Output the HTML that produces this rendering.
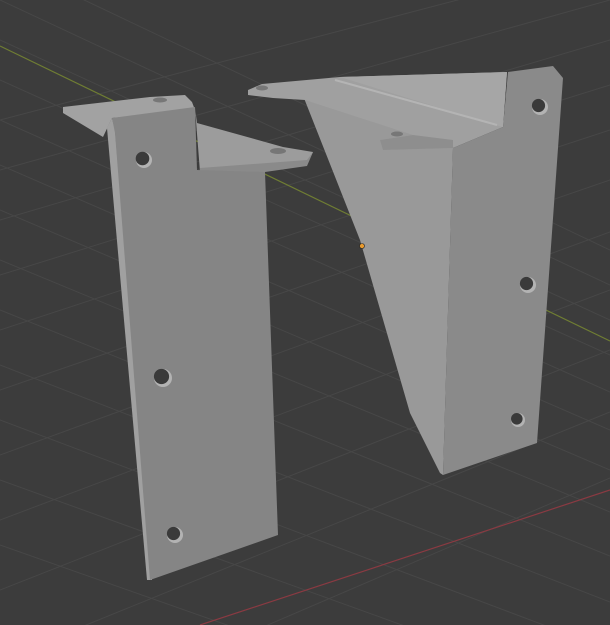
<!DOCTYPE html>
<html><head><style>html,body{margin:0;padding:0;width:610px;height:625px;background:#3b3b3b;overflow:hidden}svg{display:block}</style></head>
<body>
<svg width="610" height="625" viewBox="0 0 610 625" xmlns="http://www.w3.org/2000/svg">
<rect width="610" height="625" fill="#3c3c3c"/>
<g stroke="#474747" stroke-width="1" fill="none">
<path d="M0,-40 L610,250 M0,0 L610,285 M0,40 L610,320 M0,80 L610,355 M0,120 L610,392 M0,165 L610,430 M0,210 L610,470 M0,260 L610,512 M0,310 L610,556 M0,365 L610,602 M0,420 L610,650 M0,480 L610,700 M0,545 L610,760"/>
<path d="M0,120 L610,-40 M0,170 L610,0 M0,220 L610,40 M0,275 L610,85 M0,330 L610,130 M0,390 L610,180 M0,455 L610,232 M0,520 L610,290 M0,590 L610,350 M0,660 L610,412 M0,740 L610,478"/>
</g>
<line x1="0" y1="46" x2="610" y2="341" stroke="#6f7d33" stroke-width="1.2"/>
<line x1="200" y1="625" x2="610" y2="490" stroke="#8a3a42" stroke-width="1.2"/>
<polygon points="63,107 150,97 185,95 192,102 195,110 112,118 103,137 63,113" fill="#a2a2a2"/>
<ellipse cx="160" cy="100" rx="7" ry="2.5" fill="#777"/>
<polygon points="195,108 197,123 283,147 313,152 307,165 200,172" fill="#9c9c9c"/>
<polygon points="200,168 307,160 313,152 307,166 265,172 200,173" fill="#8a8a8a"/>
<ellipse cx="278" cy="151" rx="8" ry="3" fill="#767676"/>
<polygon points="107,128 112,118 115,130 152,580 147,580" fill="#a0a0a0"/>
<polygon points="112,118 195,107 197,170 265,172 278,535 150,580 115,133" fill="#858585"/>
<g>
<circle cx="144" cy="160" r="8" fill="#b3b3b3"/><circle cx="142.5" cy="158.5" r="6.8" fill="#3a3a3a"/>
<circle cx="163" cy="378" r="9" fill="#b3b3b3"/><circle cx="161.5" cy="376.5" r="7.6" fill="#3a3a3a"/>
<circle cx="175" cy="535" r="8" fill="#b3b3b3"/><circle cx="173.5" cy="533.5" r="6.6" fill="#3a3a3a"/>
</g>
<polygon points="300,88 360,240 410,413 440,473 443,475 453,148 420,100" fill="#999999"/>
<polygon points="248,90 262,84 340,77 507,72 503,127 453,148 383,150 380,140 413,135 305,100 273,98 248,95" fill="#a0a0a0"/>
<polygon points="340,77 507,72 503,127 495,125" fill="#a6a6a6"/>
<path d="M335,80 L497,125" stroke="#b4b4b4" stroke-width="2"/>
<polygon points="380,140 413,135 453,140 453,148 383,150" fill="#8e8e8e"/>
<ellipse cx="262" cy="88" rx="6" ry="2.5" fill="#777"/>
<ellipse cx="397" cy="134" rx="6" ry="2.5" fill="#777"/>
<polygon points="453,148 503,127 508,72 553,66 563,78 537,443 443,475" fill="#8a8a8a"/>
<circle cx="540" cy="107" r="8" fill="#b3b3b3"/><circle cx="538.5" cy="105.5" r="6.6" fill="#3a3a3a"/>
<circle cx="528" cy="285" r="8" fill="#b3b3b3"/><circle cx="526.5" cy="283.5" r="6.6" fill="#3a3a3a"/>
<circle cx="518" cy="420" r="7" fill="#b3b3b3"/><circle cx="516.8" cy="418.8" r="5.8" fill="#3a3a3a"/>
<circle cx="362" cy="246" r="2.5" fill="#e89a2e" stroke="#222" stroke-width="0.6"/>
</svg>
</body></html>
